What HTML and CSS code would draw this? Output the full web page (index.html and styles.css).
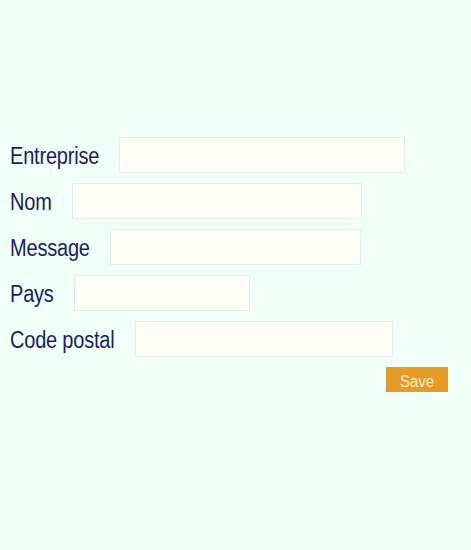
FILE: index.html
```html
<!DOCTYPE html>
<html lang="fr">
<head>
<meta charset="utf-8">
<link rel="stylesheet" href="styles.css">
</head>
<body>
<form class="form">
  <div class="row"><label class="label">Entreprise</label><input class="field w-entreprise" type="text"></div>
  <div class="row"><label class="label">Nom</label><input class="field w-nom" type="text"></div>
  <div class="row"><label class="label">Message</label><input class="field w-message" type="text"></div>
  <div class="row"><label class="label">Pays</label><input class="field w-pays" type="text"></div>
  <div class="row"><label class="label">Code postal</label><input class="field w-code" type="text"></div>
  <div class="actions"><button class="save" type="button"><span class="save-text">Save</span></button></div>
</form>
</body>
</html>
```
FILE: styles.css
```css
html, body {
  margin: 0;
  padding: 0;
  background: #f0fff8;
}
body {
  font-family: "Liberation Sans", Arial, sans-serif;
  padding: 137px 23px 0 10px;
}
.form {
  display: flex;
  flex-direction: column;
  gap: 10px;
}
.row {
  display: flex;
  align-items: center;
  gap: 20px;
  height: 36px;
}
.label {
  display: inline-block;
  font-size: 20px;
  line-height: 24px;
  letter-spacing: -0.2px;
  color: #1c1c68;
  transform: scaleY(1.15);
  margin-top: 1px;
}
.field {
  box-sizing: border-box;
  height: 36px;
  margin: 0;
  background: #fffdf7;
  border: 1px solid #dfeee6;
  border-radius: 0;
  outline: none;
}
.w-entreprise { width: 286px; }
.w-nom { width: 290px; }
.w-message { width: 251px; }
.w-pays { width: 176px; }
.w-code { width: 258px; }
.actions {
  display: flex;
  justify-content: flex-end;
}
.save {
  width: 62px;
  height: 25px;
  background: #e49b27;
  color: #fcebc4;
  border: none;
  border-radius: 0;
  font-family: "Liberation Sans", Arial, sans-serif;
  font-size: 15px;
  padding: 0;
}
.save-text {
  display: inline-block;
  transform: scaleY(1.15);
  margin-top: 1px;
}
```
